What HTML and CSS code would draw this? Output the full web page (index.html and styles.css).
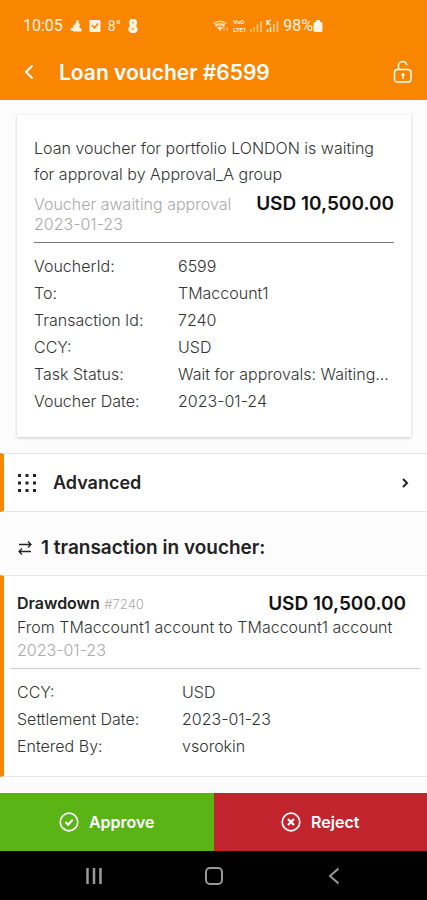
FILE: index.html
```html
<!DOCTYPE html>
<html lang="en">
<head>
<meta charset="utf-8">
<meta name="viewport" content="width=device-width, initial-scale=1">
<title>Loan voucher #6599</title>
<link rel="stylesheet" href="styles.css">
</head>
<body>
<header class="top">
  <div class="status">
    <div class="status-group status-left">
      <span>10:05</span>
      <svg width="12" height="14" viewBox="0 0 12 14" fill="currentColor"><path d="M6 3a2.500 2.500 0 0 1 3-2c-1 1-.5 3 .5 4 1 1.500 0 2.500-.5 3l2.500 2v2.500H4L.5 11v-1.500L4 8 2.500 6.500 5 5.500z"/></svg>
      <svg width="12" height="14" viewBox="0 0 12 14"><rect x="0.500" y="1" width="11" height="12" rx="1" fill="currentColor"/><path d="M3 6l2.500 3L9 4.500" fill="none" stroke="#fa8600" stroke-width="1.600"/></svg>
      <span class="temp">8°</span>
      <svg width="10" height="16" viewBox="0 0 10 16"><path d="M3 1h4l2 2v3L8 8l1.500 2v3L7 15H3L.5 13v-3L2 8 1 6V3z" fill="currentColor"/><path d="M5 4v1.500M5 10v2" stroke="#fa8600" stroke-width="1.300"/></svg>
    </div>
    <div class="status-group status-right">
      <svg width="16" height="14" viewBox="0 0 16 14"><path d="M0 4Q7-1 14 4L7 12z" fill="currentColor" opacity=".75"/><path d="M1 5.500Q7 1.500 13 5.500M3.500 8Q7 5.500 10 8" fill="none" stroke="#fa8600"/><path d="M11 8v4M14 8v4" stroke="currentColor" opacity=".6"/></svg>
      <span class="volte"><span>VoO</span><span>LTE1</span></span>
      <svg width="12" height="14" viewBox="0 0 12 14" fill="currentColor" opacity=".45"><path d="M0 10h2v3H0zM3 8h2v5H3zM6.500 5h2v8h-2zM10 2h2v11h-2z"/></svg>
      <svg width="13" height="14" viewBox="0 0 13 14" fill="none" stroke="currentColor"><path d="M1 1v5M4.500 1L1.500 3.500l3 2.500M1.500 10v3M4.500 8v5" stroke-width="1.500"/><path d="M8 5v8M11.500 2v11" stroke-width="2" opacity=".5"/></svg>
      <span>98%</span>
      <svg class="battery" width="10" height="14" viewBox="0 0 10 14" fill="currentColor"><path d="M3 1h4v2h1.500l1 1v8l-1 1h-7l-1-1V4l1-1H3z"/></svg>
    </div>
  </div>
  <div class="appbar">
    <button class="icon-button" type="button" aria-label="Back"><svg width="24" height="24" viewBox="0 0 24 24" fill="none" stroke="currentColor" stroke-width="2" stroke-linejoin="round" stroke-linecap="round"><path d="M14 6l-6 6 6 6"/></svg></button>
    <h1>Loan voucher #6599</h1>
    <button class="icon-button" type="button" aria-label="Unlock"><svg width="24" height="24" viewBox="0 0 24 24" fill="none" stroke="currentColor" stroke-width="1.500"><rect x="3.500" y="9.500" width="16.500" height="12.500" rx="3"/><path d="M7.500 9.500V6a4.200 4.200 0 0 1 8.200-1.500" stroke-linecap="round"/><path d="M12 14.500v4" stroke-linecap="round"/><circle cx="12" cy="14.500" r="1.600" fill="currentColor" stroke="none"/></svg></button>
  </div>
</header>

<main>
  <section class="card">
    <p class="message">Loan voucher for portfolio LONDON is waiting for approval by Approval_A group</p>
    <div class="summary">
      <div class="muted"><div>Voucher awaiting approval</div><div>2023-01-23</div></div>
      <strong class="amount">USD 10,500.00</strong>
    </div>
    <dl class="details">
      <dt>VoucherId:</dt><dd>6599</dd>
      <dt>To:</dt><dd>TMaccount1</dd>
      <dt>Transaction Id:</dt><dd>7240</dd>
      <dt>CCY:</dt><dd>USD</dd>
      <dt>Task Status:</dt><dd>Wait for approvals: Waiting...</dd>
      <dt>Voucher Date:</dt><dd>2023-01-24</dd>
    </dl>
  </section>

  <button class="panel advanced" type="button">
    <svg width="20" height="20" viewBox="0 0 20 20" fill="currentColor"><path d="M1 1h3v3H1zM8.500 1h3v3h-3zM16 1h3v3h-3zM1 8.500h3v3H1zM8.500 8.500h3v3h-3zM16 8.500h3v3h-3zM1 16h3v3H1zM8.500 16h3v3h-3zM16 16h3v3h-3z"/></svg>
    <span class="advanced-label">Advanced</span>
    <svg width="10" height="12" viewBox="0 0 10 12" fill="none" stroke="currentColor" stroke-width="2"><path d="M3 2l4 4-4 4"/></svg>
  </button>

  <h2>
    <svg width="16" height="16" viewBox="0 0 16 16" fill="none" stroke="currentColor" stroke-width="1.300"><path d="M2 4.500h12M11 1.500l3 3-3 3M14 11.500H2M5 8.500l-3 3 3 3"/></svg>
    1 transaction in voucher:
  </h2>

  <section class="panel transaction">
    <div class="transaction-head">
      <div class="title-row">
        <div><strong class="kind">Drawdown</strong> <span class="number">#7240</span></div>
        <strong class="amount">USD 10,500.00</strong>
      </div>
      <p class="route">From TMaccount1 account to TMaccount1 account</p>
      <div class="date">2023-01-23</div>
    </div>
    <dl class="details">
      <dt>CCY:</dt><dd>USD</dd>
      <dt>Settlement Date:</dt><dd>2023-01-23</dd>
      <dt>Entered By:</dt><dd>vsorokin</dd>
    </dl>
  </section>
</main>

<footer>
  <div class="actions">
    <button class="approve" type="button"><svg width="20" height="20" viewBox="0 0 20 20" fill="none" stroke="currentColor" stroke-width="2"><circle cx="10" cy="10" r="8.800" stroke-width="1.700"/><path d="M6.500 10l2.700 2.700 4.500-5"/></svg>Approve</button>
    <button class="reject" type="button"><svg width="20" height="20" viewBox="0 0 20 20" fill="none" stroke="currentColor" stroke-width="2.200"><circle cx="10" cy="10" r="8.800" stroke-width="1.700"/><path d="M7 7l6 6M13 7l-6 6"/></svg>Reject</button>
  </div>
  <nav class="system">
    <button type="button" aria-label="Recent apps"><svg width="20" height="20" viewBox="0 0 20 20" fill="none" stroke="currentColor" stroke-width="2.500"><path d="M3.500 2v16M10 2v16M16.500 2v16"/></svg></button>
    <button type="button" aria-label="Home"><svg width="20" height="20" viewBox="0 0 20 20" fill="none" stroke="currentColor" stroke-width="2"><rect x="2" y="2" width="16" height="16" rx="4"/></svg></button>
    <button type="button" aria-label="Go back"><svg width="20" height="20" viewBox="0 0 20 20" fill="none" stroke="currentColor" stroke-width="2"><path d="M14.500 2.500L6 10l8.500 7.500"/></svg></button>
  </nav>
</footer>
</body>
</html>
```
FILE: styles.css
```css
* {
  box-sizing: border-box;
  margin: 0;
}

body {
  min-height: 100vh;
  display: flex;
  flex-direction: column;
  font-family: Inter, "Liberation Sans", sans-serif;
  font-size: 16px;
  font-weight: 300;
  color: #333;
  background: #fcfcfc;
}

svg {
  display: block;
  flex: none;
}

button {
  font: inherit;
  color: inherit;
  border: 0;
  padding: 0;
  background: none;
}

.top {
  background: #fa8600;
  color: #fff3e4;
}

.status {
  display: flex;
  justify-content: space-between;
  padding: 16px 104px 0 23px;
  font-family: Roboto, sans-serif;
  font-weight: 400;
  line-height: 20px;
}

.status-group {
  display: flex;
  align-items: center;
}

.status-left {
  gap: 7px;
}

.status-right {
  gap: 4px;
}

.battery {
  margin-left: -4px;
}

.temp {
  font-size: 14px;
}

.volte {
  display: flex;
  flex-direction: column;
  font-size: 6px;
  font-weight: 700;
  line-height: 8px;
}

.appbar {
  display: flex;
  align-items: center;
  gap: 17px;
  height: 64px;
  padding: 8px 12px 0 18px;
  color: #fff;
}

h1 {
  flex: 1;
  font-size: 21px;
  font-weight: 600;
}

.card {
  margin: 15px 16px 16px 17px;
  padding: 20px 17px 22px;
  background: #fff;
  box-shadow: 0 1px 3px #0003;
}

.message {
  line-height: 26px;
}

.summary {
  display: flex;
  justify-content: space-between;
  align-items: flex-start;
  padding: 7px 0 8px;
  border-bottom: 1px solid #777;
}

.muted {
  line-height: 20px;
  color: #aaa;
}

.amount {
  font-size: 19px;
  font-weight: 600;
  line-height: 20px;
  color: #111;
}

.details {
  display: grid;
  grid-template-columns: 2fr 3fr;
  line-height: 27px;
  padding-top: 10px;
}

.details dd {
  min-width: 0;
  white-space: nowrap;
}

.panel {
  width: 100%;
  background: #fff;
  border: solid #e6e6e6;
  border-width: 1px 0;
  border-left: 4px solid #fa8600;
}

.advanced {
  display: flex;
  align-items: center;
  gap: 16px;
  height: 59px;
  padding: 0 17px 0 13px;
  font-size: 18px;
  font-weight: 600;
  color: #222;
  text-align: left;
}

.advanced-label {
  flex: 1;
}

h2 {
  display: flex;
  align-items: center;
  gap: 8px;
  padding: 24px 17px 15px;
  font-size: 19px;
  font-weight: 600;
  line-height: 24px;
  color: #222;
}

.transaction {
  padding: 16px 7px 16px 6px;
}

.transaction-head {
  padding: 0 14px 7px 7px;
  border-bottom: 1px solid #ccc;
}

.title-row {
  display: flex;
  justify-content: space-between;
  align-items: center;
  line-height: 22px;
}

.kind {
  font-weight: 600;
  color: #222;
}

.number {
  font-size: 13px;
  color: #aaa;
}

.route {
  line-height: 24px;
  white-space: nowrap;
}

.date {
  line-height: 22px;
  color: #aaa;
}

.transaction .details {
  grid-template-columns: 5fr 7fr;
  padding: 10px 7px 0;
}

footer {
  margin-top: auto;
}

.actions {
  display: grid;
  grid-template-columns: 1fr 1fr;
  height: 58px;
  color: #fff;
}

.actions button {
  display: flex;
  align-items: center;
  justify-content: center;
  gap: 10px;
  font-weight: 600;
}

.approve {
  background: #5bb415;
}

.reject {
  background: #c2242d;
}

.system {
  display: flex;
  justify-content: center;
  gap: 100px;
  padding: 15px 0 14px;
  background: #000;
  color: #999;
}
```
